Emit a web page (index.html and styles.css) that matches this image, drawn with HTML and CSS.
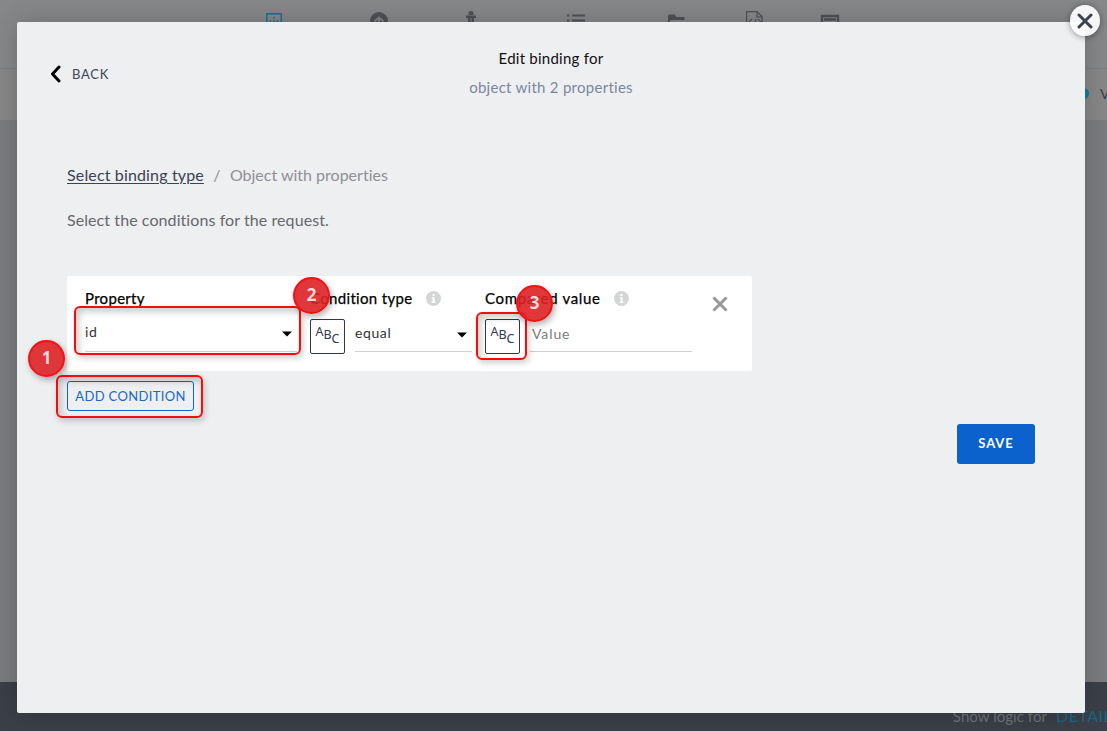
FILE: index.html
```html
<!DOCTYPE html>
<html lang="en">
<head>
<meta charset="utf-8">
<title>Edit binding</title>
<link rel="stylesheet" href="styles.css">
</head>
<body>
<div class="page">
  <div class="toolbar">
    <svg class="toolbar-icons" width="1107" height="30" viewBox="0 0 1107 30" fill="none" stroke="#505156">
      <g stroke="#176f94"><path d="M266.800 28V13.800H281.200V28" stroke-width="1.400"/><path d="M270.500 20v4M274 17v1.500M274 20v4M277.500 20v4" stroke-width="1.400"/></g>
      <circle cx="379" cy="21" r="9" fill="#505156" stroke="none"/><path d="M374.500 21.500l4.500-4 4.500 4M379 18v8" stroke="#818385" stroke-width="1.800"/>
      <path d="M468.500 15v-2q0-2 2.500-2t2.500 2v2zM466 15.500h10v2.500h-10zM468 18h6v6h-6z" fill="#505156" stroke="none"/><path d="M471 18v6" stroke="#818385"/>
      <path d="M567 15.500h2.500M567 20.500h2.500M572 15.500h13M572 20.500h13" stroke-width="2.200"/>
      <path d="M668 26V16q0-1.500 1.500-1.500h5l2 2.500h8v3h-14l-2.500 5z" fill="#505156" stroke="none"/>
      <path d="M746.600 28V11.600h10.500l5 5V28M757 12v5h5M752 19l-3 3 3 3M758 19l3 3-3 3M756 19l-2 6" stroke-width="1.200"/>
      <path d="M822 28V16h16v12M824 19.500h12" stroke-width="2.400"/>
    </svg>
  </div>
  <div class="subbar"><span class="dot"></span><span class="subbar-label">Ve</span></div>
  <div class="workspace"></div>
  <div class="footer"><span class="logic">Show logic for</span><span class="details">DETAILS</span></div>
</div>

<div class="modal">
  <header class="modal-head">
    <div class="back">
      <svg width="12" height="18" viewBox="0 0 12 18"><path d="M9 2L2.500 9l6.500 7" fill="none" stroke="#000" stroke-width="3" stroke-linecap="round" stroke-linejoin="round"/></svg>
      <span class="t-back">BACK</span>
    </div>
    <div class="titles">
      <div class="title"><span class="t-title">Edit binding for</span></div>
      <div class="subtitle"><span class="t-sub">object with 2 properties</span></div>
    </div>
  </header>
  <nav class="crumbs"><a class="t-link">Select binding type</a><span class="slash">/</span><span class="t-current">Object with properties</span></nav>
  <p class="hint">Select the conditions for the request.</p>
  <section class="card">
    <div class="field property">
      <div class="label"><span class="t-prop">Property</span></div>
      <div class="control select first"><span>id</span><svg class="caret" width="10" height="6" viewBox="0 0 10 6"><path d="M0 .5h10L5 5.500z"/></svg></div>
    </div>
    <div class="field condition">
      <div class="label"><span class="t-cond">Condition type</span><svg class="info" width="15" height="15" viewBox="0 0 15 15"><circle cx="7.500" cy="7.500" r="7.500" fill="#d4d5d8"/><path d="M6.500 3h2v2h-2zM5.800 6.200h2.700v4.300h1V12H5.700v-1.500h.9V7.500h-.8z" fill="#fff"/></svg></div>
      <div class="row">
        <div class="abc"><span>A</span><span>B</span><span>C</span></div>
        <div class="control select"><span>equal</span><svg class="caret" width="10" height="6" viewBox="0 0 10 6"><path d="M0 .5h10L5 5.500z"/></svg></div>
      </div>
    </div>
    <div class="field compared">
      <div class="label"><span class="t-comp">Compared value</span><svg class="info" width="15" height="15" viewBox="0 0 15 15"><circle cx="7.500" cy="7.500" r="7.500" fill="#d4d5d8"/><path d="M6.500 3h2v2h-2zM5.800 6.200h2.700v4.300h1V12H5.700v-1.500h.9V7.500h-.8z" fill="#fff"/></svg></div>
      <div class="row">
        <div class="abc"><span>A</span><span>B</span><span>C</span></div>
        <div class="control value"><span>Value</span></div>
      </div>
    </div>
    <svg class="remove" width="16" height="16" viewBox="0 0 16 16"><path d="M1.500 1.500l13 13M14.500 1.500l-13 13" stroke="#999" stroke-width="3"/></svg>
  </section>
  <button class="add"><span>ADD CONDITION</span></button>
  <div class="actions"><button class="save">SAVE</button></div>
</div>

<div class="close"><svg width="16" height="16" viewBox="0 0 16 16"><path d="M2 2l12 12M14 2L2 14" stroke="#3c4154" stroke-width="3" stroke-linecap="round"/></svg></div>
<div class="frame frame-property"></div>
<div class="frame frame-add"></div>
<div class="frame frame-value"></div>
<div class="badge badge-1">1</div>
<div class="badge badge-2">2</div>
<div class="badge badge-3">3</div>
</body>
</html>
```
FILE: styles.css
```css
* { box-sizing: border-box; }
body { margin: 0; width: 1107px; height: 731px; overflow: hidden; position: relative; font-family: Lato, "Open Sans", sans-serif; font-size: 15px; color: #333; font-variant-ligatures: none; }
button { font-family: inherit; cursor: pointer; }
svg { display: block; flex: none; }
span, a { white-space: nowrap; }

.page { width: 1107px; height: 731px; display: flex; flex-direction: column; overflow: hidden; }
.toolbar { height: 68px; background: #858789; flex: none; }
.subbar { height: 52px; background: #878787; border-top: 1px solid #7c7d7f; display: flex; align-items: center; justify-content: flex-end; gap: 11px; padding-bottom: 2px; flex: none; }
.dot { width: 11px; height: 11px; border-radius: 50%; background: #147b9b; }
.subbar-label { width: 7px; overflow: visible; color: #3b3d48; font-size: 14px; }
.workspace { flex: 1; background: #7b7c7f; }
.footer { height: 49px; background: #3b3f48; display: flex; justify-content: flex-end; gap: 9px; padding-top: 24px; flex: none; line-height: 20px; color: #6e7376; }
.logic { letter-spacing: .05px; }
.details { width: 51px; color: #176886; font-size: 16px; overflow: hidden; letter-spacing: .5px; }

.modal { position: absolute; left: 17px; top: 22px; width: 1068px; height: 691px; background: #eeeff1; border-radius: 2px; box-shadow: 0 0 26px rgba(0,0,0,.2); padding: 22px 50px 0; }
.modal-head { height: 110px; display: grid; grid-template-columns: 160px 1fr 160px; }
.back { display: flex; align-items: center; gap: 10px; height: 24px; margin: 18px 0 0 -17px; font-size: 13px; letter-spacing: .75px; color: #3b4557; }
.back svg { margin-top: -1px; }
.titles { text-align: center; padding-top: 1px; }
.title { color: #111; line-height: 26px; letter-spacing: .25px; }
.subtitle { color: #7a879f; line-height: 26px; margin-top: 3px; letter-spacing: .27px; }
.crumbs { display: flex; align-items: center; height: 24px; margin-top: 8px; color: #8f9094; font-size: 16px; }
.t-link { color: #3a4253; text-decoration: underline; text-decoration-thickness: 1px; text-underline-offset: 2px; letter-spacing: .15px; }
.t-current { letter-spacing: 0; }
.slash { width: 26px; text-align: center; }
.hint { margin: 22px 0 0; height: 24px; line-height: 24px; color: #65686c; white-space: nowrap; font-size: 16px; letter-spacing: .08px; }
.card { margin-top: 44px; width: 685px; height: 95px; background: #fff; border-radius: 2px; display: flex; padding: 11px 0 0 18px; }
.field { flex: none; }
.property { width: 225px; }
.condition { width: 175px; }
.compared { width: 227px; }
.label { height: 22px; display: flex; align-items: center; color: #000; font-size: 15px; -webkit-text-stroke: .25px #000; }
.t-prop { letter-spacing: .3px; }
.t-cond { letter-spacing: .33px; }
.t-comp { letter-spacing: .66px; }
.info { margin: 1px 0 0 13px; }
.row { display: flex; margin-top: 10px; }
.abc { width: 35px; height: 35px; border: 1px solid #30384b; border-radius: 2px; display: flex; justify-content: center; font-size: 12.500px; line-height: 15px; color: #30384b; padding-top: 4px; font-family: "Noto Sans", sans-serif; flex: none; }
.abc span:nth-child(2) { padding-top: 3px; }
.abc span:nth-child(3) { padding-top: 7px; }
.control { display: flex; align-items: center; font-size: 14px; border-bottom: 1px solid #cfd0d2; height: 33px; letter-spacing: .6px; }
.select { width: 117px; margin-left: 10px; justify-content: space-between; padding-right: 5px; padding-bottom: 5px; }
.select.first { width: 212px; margin: 10px 0 0; padding-bottom: 7px; }
.caret { margin-top: 5px; }
.first .caret { margin-top: 4px; }
.value { width: 162px; margin-left: 10px; padding-left: 2px; padding-bottom: 3px; color: #7b7b7b; letter-spacing: .9px; }
.remove { margin-top: 9px; }
.add { display: block; width: 127px; height: 30px; margin-top: 10px; padding: 0; background: transparent; border: 1px solid #1161c6; border-radius: 3px; color: #1767cc; font-size: 13px; letter-spacing: .35px; white-space: nowrap; }
.actions { display: flex; justify-content: flex-end; margin-top: 13px; }
.save { width: 78px; height: 40px; border: 0; border-radius: 3px; background: #0b62cd; color: #fff; font-size: 13px; font-weight: 700; letter-spacing: .9px; padding: 0 0 2px; }

.close { position: absolute; left: 1070px; top: 5px; width: 30px; height: 31px; border-radius: 50%; background: rgba(255,255,255,.93); display: flex; align-items: center; justify-content: center; box-shadow: 0 1px 6px rgba(0,0,0,.4); }
.frame { position: absolute; border: 2px solid #f40d0d; border-radius: 6px; box-shadow: 2px 3px 6px rgba(0,0,0,.2), inset 3px 4px 7px rgba(0,0,0,.2); }
.frame-property { left: 74px; top: 306px; width: 227px; height: 49px; }
.frame-add { left: 56px; top: 375px; width: 147px; height: 43px; }
.frame-value { left: 476px; top: 312px; width: 51px; height: 48px; }
.badge { position: absolute; width: 37px; height: 37px; border: 2px solid #f31212; border-radius: 50%; background: rgba(219,33,37,.9); box-shadow: 2px 3px 6px rgba(0,0,0,.3); color: #f8dada; display: flex; align-items: center; justify-content: center; font: bold 17px "Open Sans", sans-serif; padding-bottom: 2px; }
.badge-1 { left: 28px; top: 340px; }
.badge-2 { left: 293px; top: 277px; }
.badge-3 { left: 516px; top: 285px; }
```
